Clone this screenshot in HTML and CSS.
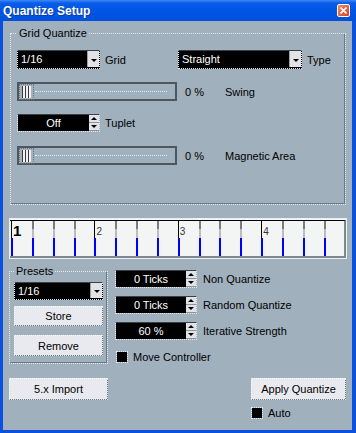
FILE: index.html
```html
<!DOCTYPE html>
<html lang="en">
<head>
    <meta charset="UTF-8">
    <meta name="viewport" content="width=device-width, initial-scale=1.0">
    <title>Quantize Setup</title>
    <link rel="stylesheet" href="styles.css">
</head>
<body>
    <div class="window">
        <div class="titlebar">
            <span class="title">Quantize Setup</span>
            <button class="close-btn" aria-label="Close">
                <svg width="7" height="7" viewBox="0 0 7 7"><path d="M0.5 0.5 L6.5 6.5 M6.5 0.5 L0.5 6.5" stroke="#fff" stroke-width="1.6"/></svg>
            </button>
        </div>

        <div class="client">
            <fieldset class="group grid-group">
                <legend>Grid Quantize</legend>
                <div class="row row-combo">
                    <div class="col-left">
                        <div class="combo combo-grid"><span>1/16</span><i class="drop"></i></div>
                        <span class="label">Grid</span>
                    </div>
                    <div class="combo combo-type"><span>Straight</span><i class="drop"></i></div>
                    <span class="label">Type</span>
                </div>
                <div class="row row-slider">
                    <div class="slider"><div class="thumb"></div><div class="track"></div></div>
                    <span class="pct">0 %</span>
                    <span class="label">Swing</span>
                </div>
                <div class="row row-spin">
                    <div class="spin spin-tuplet">
                        <span class="value">Off</span>
                        <span class="arrows"><i class="up"></i><i class="down"></i></span>
                    </div>
                    <span class="label">Tuplet</span>
                </div>
                <div class="row row-slider last">
                    <div class="slider"><div class="thumb"></div><div class="track"></div></div>
                    <span class="pct">0 %</span>
                    <span class="label">Magnetic Area</span>
                </div>
            </fieldset>

            <div class="ruler">
                <div class="ticks" id="ticks">
                    <!-- 4 bars x 4 beats, filled by script below -->
                </div>
            </div>

            <div class="lower">
                <fieldset class="group presets">
                    <legend>Presets</legend>
                    <div class="combo combo-preset"><span>1/16</span><i class="drop"></i></div>
                    <button class="btn btn-store">Store</button>
                    <button class="btn btn-remove">Remove</button>
                </fieldset>
                <div class="options">
                    <div class="option-row">
                        <div class="spin spin-ticks">
                            <span class="value">0 Ticks</span>
                            <span class="arrows"><i class="up"></i><i class="down"></i></span>
                        </div>
                        <span class="label">Non Quantize</span>
                    </div>
                    <div class="option-row">
                        <div class="spin spin-ticks">
                            <span class="value">0 Ticks</span>
                            <span class="arrows"><i class="up"></i><i class="down"></i></span>
                        </div>
                        <span class="label">Random Quantize</span>
                    </div>
                    <div class="option-row">
                        <div class="spin spin-ticks">
                            <span class="value">60 %</span>
                            <span class="arrows"><i class="up"></i><i class="down"></i></span>
                        </div>
                        <span class="label">Iterative Strength</span>
                    </div>
                    <div class="check-row move-row">
                        <span class="check"></span>
                        <span class="label">Move Controller</span>
                    </div>
                </div>
            </div>

            <div class="footer">
                <button class="btn btn-import">5.x Import</button>
                <div class="apply-col">
                    <button class="btn btn-apply">Apply Quantize</button>
                    <div class="check-row auto-row">
                        <span class="check"></span>
                        <span class="label">Auto</span>
                    </div>
                </div>
            </div>
        </div>
    </div>

    <script>
        // build the ruler: 16 beats, a bar number every 4th
        const ticks = document.getElementById('ticks');
        for (let i = 0; i < 16; i++) {
            const cell = document.createElement('div');
            const isBar = i % 4 === 0;
            cell.className = isBar ? 'beat bar' : 'beat';
            if (isBar) {
                const n = i / 4 + 1;
                cell.innerHTML = `<i class="tk"></i><b class="${n === 1 ? 'num first' : 'num'}">${n}</b><i class="bl"></i>`;
            } else {
                cell.innerHTML = `<i class="tk"></i><span></span><i class="bl"></i>`;
            }
            ticks.appendChild(cell);
        }
    </script>
</body>
</html>
```

FILE: styles.css
```css
body {
    margin: 0;
    padding: 0;
    font-family: "Liberation Sans", Arial, sans-serif;
    font-size: 11px;
    color: #000;
    background-color: #a0b0bd;
}
.window {
    width: 356px;
    height: 433px;
    box-sizing: border-box;
    display: flex;
    flex-direction: column;
    background-color: #0a52de;
    border: 3px solid #0a52de;
    border-top: none;
    border-right-width: 4px;
}
.titlebar {
    height: 21px;
    margin: 0 -4px 0 -3px;
    padding: 0 6px 0 6px;
    display: flex;
    align-items: center;
    justify-content: space-between;
    background: linear-gradient(#3d8af7 0, #0a5de8 3px, #0055e5 50%, #0050dc 100%);
}
.title {
    color: #fff;
    font-weight: bold;
    font-size: 12px;
    text-shadow: 1px 1px 0 #0b3aa0;
    margin-left: -3px;
}
.close-btn {
    width: 13px;
    height: 13px;
    padding: 0;
    margin-right: 0;
    border: 1px solid #fff;
    border-radius: 2px;
    background: linear-gradient(135deg, #f08a6a, #d8401e);
    display: flex;
    align-items: center;
    justify-content: center;
}
.client {
    flex: 1;
    background-color: #a0b0bd;
    padding: 0 6px;
    display: flex;
    flex-direction: column;
}
.label {
    white-space: nowrap;
}

/* group boxes */
.group {
    margin: 0;
    border: 1px dotted #e4eaee;
    box-shadow: inset -1px -1px 0 #6c7882;
    min-width: 0;
}
.group legend {
    padding: 0 2px;
    line-height: 13px;
    height: 13px;
}
.grid-group {
    margin: 6px 0 0 1px;
    padding: 10px 6px 39px 6px;
}
.row {
    display: flex;
    align-items: center;
}
.row-combo {
    height: 19px;
    margin-bottom: 13px;
}
.col-left {
    width: 161px;
    display: flex;
    align-items: center;
    flex-shrink: 0;
}
.row-slider {
    margin-bottom: 13px;
}
.row-slider.last {
    margin-bottom: 0;
}
.row-spin {
    margin-bottom: 14px;
}
.row .label {
    margin-left: 5px;
}

/* black combo box */
.combo {
    box-sizing: border-box;
    height: 19px;
    display: flex;
    background-color: #000;
    color: #fff;
    border: 1px dotted #e4eaee;
    border-top-color: #3a4047;
    border-top-style: solid;
}
.combo span {
    flex: 1;
    padding-left: 3px;
    line-height: 16px;
}
.combo .drop {
    width: 11px;
    background-color: #e2e3e7;
    border-left: 1px solid #9aa0a6;
    display: flex;
    align-items: center;
    justify-content: center;
    margin-bottom: 1px;
}
.combo .drop::after {
    content: "";
    border-left: 3px solid transparent;
    border-right: 3px solid transparent;
    border-top: 3px solid #000;
    margin-top: 2px;
}
.combo-grid {
    width: 83px;
}
.combo-type {
    width: 124px;
}
.combo-preset {
    width: 89px;
    height: 18px;
}

/* slider */
.slider {
    box-sizing: border-box;
    width: 160px;
    height: 19px;
    border: 2px solid #4f575e;
    display: flex;
    align-items: center;
}
.thumb {
    box-sizing: border-box;
    width: 15px;
    height: 16px;
    margin-left: 0;
    border: 1px dotted #6f7479;
    background: repeating-linear-gradient(90deg, #f2f2f2 0 2px, #3a3a3a 2px 3px);
    background-clip: content-box;
    padding: 1px 2px 1px 2px;
    background-color: #f2f2f2;
}
.track {
    flex: 1;
    height: 0;
    border-top: 1px dotted #e6ecf0;
    margin: 0 8px 0 1px;
}
.pct {
    width: 40px;
    margin-left: 8px;
}
.row-slider .label {
    margin-left: 0;
}

/* spin boxes */
.spin {
    box-sizing: border-box;
    height: 18px;
    display: flex;
    border: 1px dotted #e4eaee;
    border-top: 1px solid #3a4047;
}
.spin .value {
    flex: 1;
    background-color: #000;
    color: #fff;
    text-align: center;
    line-height: 16px;
}
.spin .arrows {
    width: 10px;
    display: flex;
    flex-direction: column;
}
.spin .arrows i {
    flex: 1;
    background-color: #e2e3e7;
    border-bottom: 1px solid #8d949a;
    display: flex;
    align-items: center;
    justify-content: center;
}
.spin .arrows .up::after {
    content: "";
    border-left: 3px solid transparent;
    border-right: 3px solid transparent;
    border-bottom: 3px solid #000;
}
.spin .arrows .down::after {
    content: "";
    border-left: 3px solid transparent;
    border-right: 3px solid transparent;
    border-top: 3px solid #000;
}
.spin-tuplet {
    width: 83px;
}
.spin-ticks {
    width: 82px;
}

/* ruler */
.ruler {
    box-sizing: border-box;
    width: 338px;
    margin-top: 13px;
    border: 1px dotted #e4eaee;
    background-color: #f3f5f5;
    padding-top: 1px;
}
.ticks {
    display: flex;
    padding-left: 1px;
    border-top: 1px solid #000;
    border-bottom: 2px solid #7c8790;
    border-right: 2px solid #7c8790;
    overflow: hidden;
}
.beat {
    flex: 0 0 20.85px;
    display: grid;
    grid-template-columns: 2px 1fr;
    grid-template-rows: 17px 18px;
}
.beat .tk {
    background: linear-gradient(#777c81 0 8px, #b8bdc1 8px);
}
.beat.bar .tk {
    background: #000;
    width: 1px;
}
.beat .bl {
    background-color: #0000ff;
}
.num {
    align-self: end;
    font-weight: normal;
    font-size: 10px;
    line-height: 9px;
    color: #333;
    padding-bottom: 2px;
}
.num.first {
    font-weight: bold;
    font-size: 15px;
    line-height: 12px;
    color: #000;
    padding-bottom: 1px;
}

/* lower section */
.lower {
    display: flex;
    align-items: flex-start;
}
.presets {
    width: 99px;
    box-sizing: border-box;
    margin-top: 6px;
    padding: 4px 4px 7px 4px;
}
.btn {
    display: block;
    box-sizing: border-box;
    font-family: inherit;
    font-size: 11px;
    color: #000;
    background-color: #e9eaef;
    border: 1px solid #fff;
    border-right-color: #6c7882;
    border-bottom-color: #6c7882;
    outline: 1px dotted #dfe4e8;
    outline-offset: -1px;
    padding: 0;
}
.btn-store {
    width: 89px;
    height: 20px;
    margin-top: 6px;
}
.btn-remove {
    width: 89px;
    height: 21px;
    margin-top: 9px;
}
.options {
    margin: 11px 0 0 7px;
}
.option-row {
    display: flex;
    align-items: center;
    margin-bottom: 8px;
}
.option-row .label {
    margin-left: 6px;
}
.check-row {
    display: flex;
    align-items: center;
}
.check {
    width: 10px;
    height: 10px;
    background-color: #000;
    outline: 1px dotted #e4eaee;
    margin: 1px;
}
.check-row .label {
    margin-left: 5px;
}
.move-row {
    margin-top: 11px;
    margin-left: 1px;
}

/* footer */
.footer {
    display: flex;
    justify-content: space-between;
    align-items: flex-start;
    margin-top: 14px;
    width: 337px;
}
.btn-import {
    width: 99px;
    height: 22px;
}
.btn-apply {
    width: 95px;
    height: 22px;
}
.auto-row {
    margin-top: 7px;
}
```
